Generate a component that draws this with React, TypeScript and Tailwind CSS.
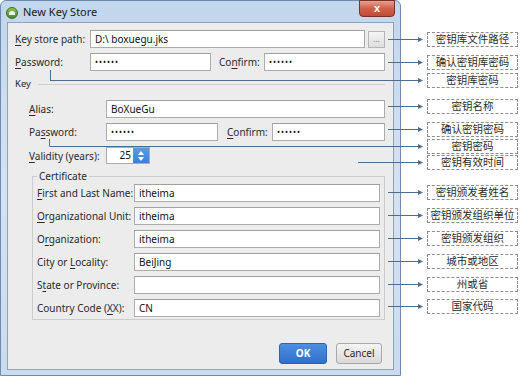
import type { ReactNode } from "react"

const UI = "font-['Noto_Sans','Liberation_Sans',sans-serif]"

const CALLOUTS = [
  { text: "密钥库文件路径", y: 39, from: 388, mt: "mt-[32px]" },
  { text: "确认密钥库密码", y: 62, from: 388, mt: "mt-[8px]" },
  { text: "密钥库密码", y: 80, from: 50, mt: "mt-[3px]" },
  { text: "密钥名称", y: 106, from: 388, mt: "mt-[11px]" },
  { text: "确认密钥密码", y: 129, from: 388, mt: "mt-[8px]" },
  { text: "密钥密码", y: 146, from: 50, mt: "mt-[2px]" },
  { text: "密钥有效时间", y: 162, from: 358, mt: "mt-[1px]" },
  { text: "密钥颁发者姓名", y: 192, from: 388, mt: "mt-[15px]" },
  { text: "密钥颁发组织单位", y: 215, from: 388, mt: "mt-[8px]" },
  { text: "密钥颁发组织", y: 238, from: 388, mt: "mt-[8px]" },
  { text: "城市或地区", y: 261, from: 388, mt: "mt-[8px]" },
  { text: "州或省", y: 284, from: 388, mt: "mt-[8px]" },
  { text: "国家代码", y: 306, from: 388, mt: "mt-[7px]" },
]

function U({ children }: { children: ReactNode }) {
  return <span className="underline underline-offset-[2px] decoration-[1px]">{children}</span>
}

function Box({ value, secret, className = "" }: { value?: string; secret?: boolean; className?: string }) {
  return (
    <div
      className={`h-[18px] flex items-center bg-white border border-[#acacac] border-t-[#a0a0a0] pl-[4px] text-[10px] text-[#111] whitespace-nowrap ${className}`}
    >
      {secret ? <span className="text-[8px] tracking-[1px] leading-none">••••••</span> : value}
    </div>
  )
}

function Label({ className = "", children }: { className?: string; children: ReactNode }) {
  return <div className={`shrink-0 whitespace-nowrap text-[10px] leading-[14px] text-[#2a2a2a] ${className}`}>{children}</div>
}

function CertRow({ label, value }: { label: ReactNode; value?: string }) {
  return (
    <div className="flex items-center">
      <Label className="w-[99px] pl-[2px]">{label}</Label>
      <Box value={value} className="flex-1" />
    </div>
  )
}

function Spinner({ value }: { value: string }) {
  return (
    <div className="flex h-[17px] w-[44px] border border-[#acacac] bg-white">
      <div className="flex-1 flex items-center justify-end pr-[2px] text-[10px] text-[#111]">{value}</div>
      <div className="w-[16px] flex flex-col items-center justify-center gap-[2px] bg-gradient-to-b from-[#5a9be6] to-[#3d7fd4]">
        <div className="w-0 h-0 border-l-[3px] border-r-[3px] border-b-[4px] border-l-transparent border-r-transparent border-b-white" />
        <div className="w-0 h-0 border-l-[3px] border-r-[3px] border-t-[4px] border-l-transparent border-r-transparent border-t-white" />
      </div>
    </div>
  )
}

function Dialog() {
  return (
    <div className="shrink-0 w-[401px] h-[376px] flex flex-col rounded-t-[6px] border border-[#6f8cae] bg-gradient-to-b from-[#c2d6ec] via-[#d4e3f3] to-[#c9dbee] px-[6px] pb-[5px]">
      <div className="h-[21px] flex items-start">
        <div className="mt-[6px] -ml-[1px] w-[12px] h-[12px] rounded-full bg-gradient-to-b from-[#8cc152] to-[#4e8a2a] border border-[#3e6d22] flex items-center justify-center">
          <div className="w-[6px] h-[4px] rounded-t-full bg-white/90" />
        </div>
        <div className={`ml-[5px] mt-[4px] text-[11px] leading-[14px] text-[#1b1b1b] ${UI}`}>New Key Store</div>
        <div className="ml-auto -mt-[1px] mr-[-1px] w-[36px] h-[17px] rounded-b-[4px] border border-[#7a3026] bg-gradient-to-b from-[#e5a08f] via-[#d0604b] to-[#c24a33] flex items-center justify-center text-white text-[11px] font-bold font-['Liberation_Sans',sans-serif]">
          x
        </div>
      </div>
      <div className={`flex-1 flex flex-col border border-[#8fa3ba] bg-[#ececec] pt-[7px] pl-[7px] pr-[8px] pb-[5px] ${UI}`}>
        <div className="flex items-center">
          <Label className="w-[75px]">
            <U>K</U>ey store path:
          </Label>
          <Box value="D:\ boxuegu.jks" className="flex-1" />
          <div className="ml-[3px] w-[17px] h-[17px] border border-[#b4b4b4] bg-gradient-to-b from-[#f4f4f4] to-[#dedede] flex items-center justify-center text-[8px] text-[#777] leading-none">
            ...
          </div>
        </div>
        <div className="mt-[5px] flex items-center">
          <Label className="w-[75px]">
            <U>P</U>assword:
          </Label>
          <Box secret className="w-[121px]" />
          <Label className="ml-[8px] w-[45px]">
            Co<U>n</U>firm:
          </Label>
          <Box secret className="flex-1" />
        </div>
        <div className="mt-[7px] flex items-center h-[12px]">
          <div className="text-[9.5px] text-[#2a2a2a]">Key</div>
          <div className="ml-[7px] flex-1 border-t border-[#d0d0d0]" />
        </div>
        <div className="mt-[10px] ml-[14px] flex items-center">
          <Label className="w-[77px]">
            <U>A</U>lias:
          </Label>
          <Box value="BoXueGu" className="flex-1" />
        </div>
        <div className="mt-[5px] ml-[14px] flex items-center">
          <Label className="w-[77px]">
            Pa<U>s</U>sword:
          </Label>
          <Box secret className="w-[112px]" />
          <Label className="ml-[9px] w-[45px]">
            <U>C</U>onfirm:
          </Label>
          <Box secret className="flex-1" />
        </div>
        <div className="mt-[6px] ml-[14px] flex items-center">
          <Label className="w-[77px]">
            <U>V</U>alidity (years):
          </Label>
          <Spinner value="25" />
        </div>
        <fieldset className="mt-[5px] ml-[17px] border border-[#cdcdcd] pl-[2px] pr-[4px] pt-[1px] pb-[2px] flex flex-col gap-[5px]">
          <legend className="ml-[2px] px-[2px] text-[10px] leading-[14px] text-[#2a2a2a]">Certificate</legend>
          <CertRow label={<><U>F</U>irst and Last Name:</>} value="itheima" />
          <CertRow label={<><U>O</U>rganizational Unit:</>} value="itheima" />
          <CertRow label={<>O<U>r</U>ganization:</>} value="itheima" />
          <CertRow label={<>City or <U>L</U>ocality:</>} value="BeiJing" />
          <CertRow label={<>S<U>t</U>ate or Province:</>} />
          <CertRow label={<>Country Code (<U>X</U>X):</>} value="CN" />
        </fieldset>
        <div className="mt-auto flex justify-end gap-[9px] pr-[3px]">
          <div className="w-[48px] h-[21px] rounded-[3px] border border-[#2b62b4] bg-gradient-to-b from-[#4d8fe0] to-[#2f6fcb] flex items-center justify-center text-[10px] font-bold text-white">
            OK
          </div>
          <div className="w-[46px] h-[21px] rounded-[3px] border border-[#a9a9a9] bg-gradient-to-b from-[#f5f5f5] to-[#d9d9d9] flex items-center justify-center text-[10px] text-[#2a2a2a]">
            Cancel
          </div>
        </div>
      </div>
    </div>
  )
}

function Connectors() {
  const tip = 423
  return (
    <svg className="absolute inset-0 pointer-events-none" width={523} height={377} viewBox="0 0 523 377">
      <g stroke="#4d6d8e" strokeWidth={1} fill="none">
        <path d="M50.5 70 V80.5" />
        <path d="M49.5 139 V146.5" />
        {CALLOUTS.map((c) => (
          <path key={c.text} d={`M${c.from} ${c.y + 0.5} H${tip - 4}`} />
        ))}
      </g>
      <g fill="#4d6d8e">
        {CALLOUTS.map((c) => (
          <polygon
            key={c.text}
            points={`${tip - 5},${c.y + 0.5 - 2.5} ${tip},${c.y + 0.5} ${tip - 5},${c.y + 0.5 + 2.5}`}
          />
        ))}
      </g>
    </svg>
  )
}

export default function App() {
  return (
    <div className="relative w-[523px] h-[377px] overflow-hidden bg-white flex">
      <Dialog />
      <div className="pl-[26px] flex flex-col">
        {CALLOUTS.map((c) => (
          <div
            key={c.text}
            className={`${c.mt} w-[91px] h-[15px] border border-dashed border-[#8c8c8c] flex items-center justify-center whitespace-nowrap text-[10.5px] leading-none text-[#2b2b2b] font-['Noto_Sans_CJK_SC',sans-serif]`}
          >
            {c.text}
          </div>
        ))}
      </div>
      <Connectors />
    </div>
  )
}
